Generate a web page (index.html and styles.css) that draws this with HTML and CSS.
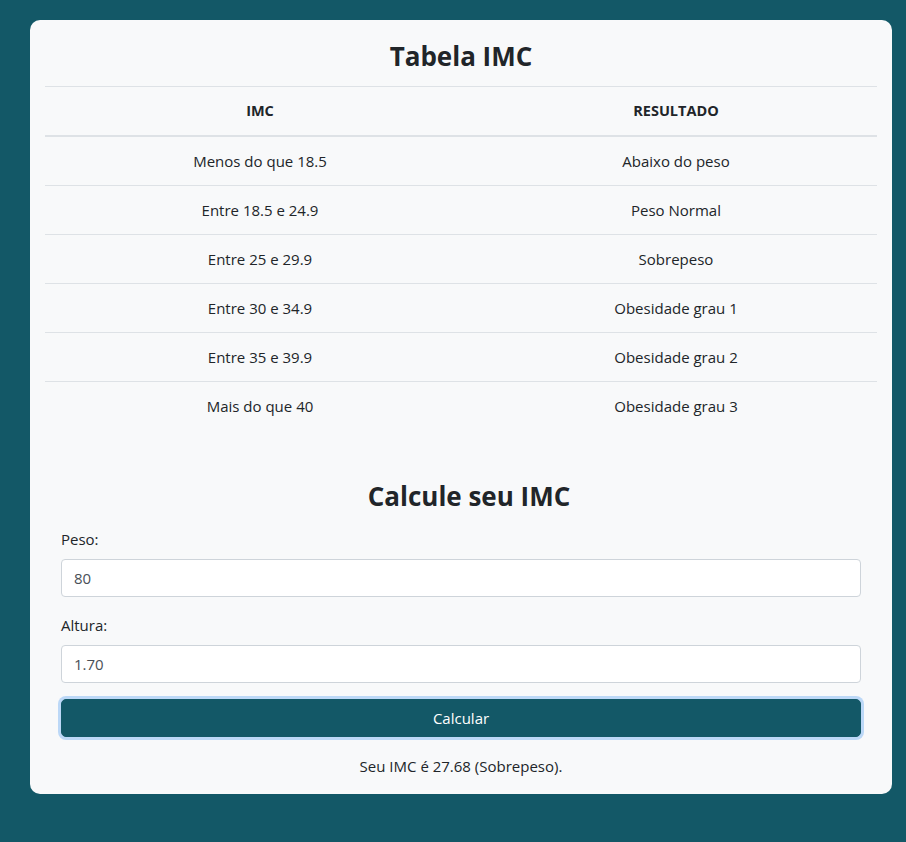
FILE: index.html
```html
<!DOCTYPE html>
<html lang="pt-BR">
<head>
<meta charset="utf-8">
<title>Tabela IMC</title>
<link rel="stylesheet" href="styles.css">
</head>
<body>
<main class="card">
  <h2 class="title">Tabela IMC</h2>
  <table class="imc-table">
    <thead>
      <tr><th class="col-imc">IMC</th><th>RESULTADO</th></tr>
    </thead>
    <tbody>
      <tr><td>Menos do que 18.5</td><td>Abaixo do peso</td></tr>
      <tr><td>Entre 18.5 e 24.9</td><td>Peso Normal</td></tr>
      <tr><td>Entre 25 e 29.9</td><td>Sobrepeso</td></tr>
      <tr><td>Entre 30 e 34.9</td><td>Obesidade grau 1</td></tr>
      <tr><td>Entre 35 e 39.9</td><td>Obesidade grau 2</td></tr>
      <tr><td>Mais do que 40</td><td>Obesidade grau 3</td></tr>
    </tbody>
  </table>
  <section class="calc">
    <h2 class="title calc-title">Calcule seu IMC</h2>
    <form class="form">
      <label class="label" for="peso">Peso:</label>
      <input class="input" id="peso" type="text" value="80">
      <label class="label" for="altura">Altura:</label>
      <input class="input" id="altura" type="text" value="1.70">
      <button class="btn" type="button">Calcular</button>
    </form>
    <p class="result">Seu IMC é 27.68 (Sobrepeso).</p>
  </section>
</main>
</body>
</html>
```
FILE: styles.css
```css
* { box-sizing: border-box; }
html, body { margin: 0; }
body {
  background: #135867;
  font-family: "Open Sans", "Noto Sans", "Liberation Sans", sans-serif;
  font-size: 15px;
  color: #212529;
  padding: 20px 14px 49px 30px;
}
.card {
  background: #f8f9fa;
  border-radius: 10px;
  padding: 15px 15px 16px 15px;
  width: 862px;
}
.title {
  margin: 4px 0 12px;
  text-align: center;
  font-size: 26px;
  line-height: 35px;
  font-weight: 700;
}
.imc-table {
  width: 100%;
  border-collapse: collapse;
  border-top: 1px solid #dee2e6;
}
.imc-table th, .imc-table td {
  padding: 12px;
  line-height: 24px;
  text-align: center;
}
.imc-table .col-imc { width: 430px; }
.imc-table th {
  font-weight: 700;
  font-size: 14.5px;
  border-bottom: 2px solid #dee2e6;
}
.imc-table td {
  border-bottom: 1px solid #dee2e6;
}
.imc-table tbody tr:last-child td { border-bottom: none; }
.calc { padding: 49px 16px 0; }
.calc-title { margin: 0 0 13px; padding-left: 16px; }
.form { display: flex; flex-direction: column; }
.label { line-height: 24px; margin-bottom: 8px; }
.input {
  height: 38px;
  padding: 6px 12px;
  font: inherit;
  color: #495057;
  background: #fff;
  border: 1px solid #ced4da;
  border-radius: 4px;
  margin-bottom: 16px;
}
.input:last-of-type { margin-bottom: 0; }
.btn {
  margin-top: 16px;
  height: 38px;
  font: inherit;
  color: #fff;
  background: #135867;
  border: 1px solid #135867;
  border-radius: 5px;
  box-shadow: 0 0 0 3px #bcd8f7;
}
.result {
  margin: 17px 0 0;
  text-align: center;
  line-height: 24px;
}
```
